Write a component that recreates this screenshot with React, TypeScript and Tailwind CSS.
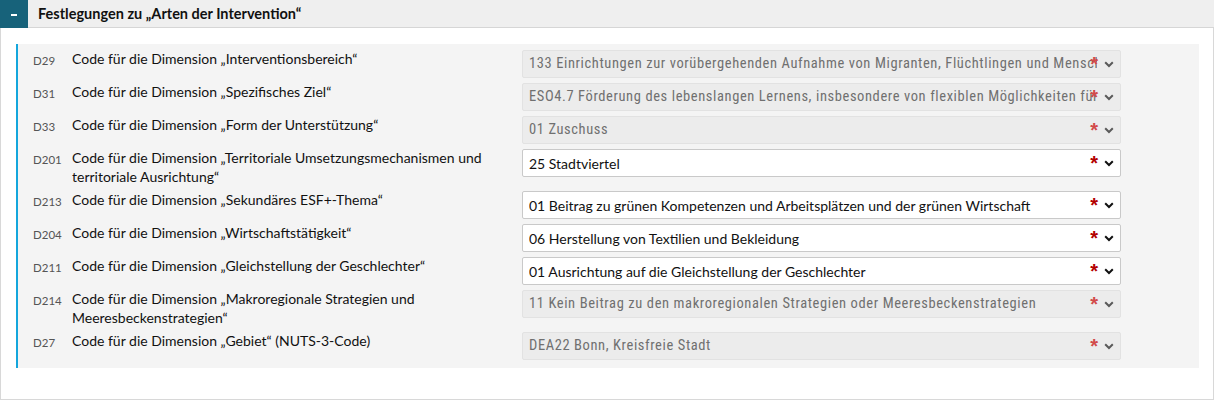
const rows = [
  { code: 'D29', label: 'Code für die Dimension „Interventionsbereich“', value: '133 Einrichtungen zur vorübergehenden Aufnahme von Migranten, Flüchtlingen und Menschen, die internationalen Schutz beantragen oder genießen', disabled: true },
  { code: 'D31', label: 'Code für die Dimension „Spezifisches Ziel“', value: 'ESO4.7 Förderung des lebenslangen Lernens, insbesondere von flexiblen Möglichkeiten für Weiterbildung und Umschulung', disabled: true },
  { code: 'D33', label: 'Code für die Dimension „Form der Unterstützung“', value: '01 Zuschuss', disabled: true },
  { code: 'D201', label: 'Code für die Dimension „Territoriale Umsetzungsmechanismen und territoriale Ausrichtung“', value: '25 Stadtviertel', disabled: false },
  { code: 'D213', label: 'Code für die Dimension „Sekundäres ESF+-Thema“', value: '01 Beitrag zu grünen Kompetenzen und Arbeitsplätzen und der grünen Wirtschaft', disabled: false },
  { code: 'D204', label: 'Code für die Dimension „Wirtschaftstätigkeit“', value: '06 Herstellung von Textilien und Bekleidung', disabled: false },
  { code: 'D211', label: 'Code für die Dimension „Gleichstellung der Geschlechter“', value: '01 Ausrichtung auf die Gleichstellung der Geschlechter', disabled: false },
  { code: 'D214', label: 'Code für die Dimension „Makroregionale Strategien und Meeresbeckenstrategien“', value: '11 Kein Beitrag zu den makroregionalen Strategien oder Meeresbeckenstrategien', disabled: true },
  { code: 'D27', label: 'Code für die Dimension „Gebiet“ (NUTS-3-Code)', value: 'DEA22 Bonn, Kreisfreie Stadt', disabled: true },
];

const Chevron = ({ dim }: { dim: boolean }) => (
  <svg width="10" height="7" viewBox="0 0 10 7" className="shrink-0">
    <path d="M1.2 1.3 5 5 8.8 1.3" fill="none" stroke={dim ? '#5a5a5a' : '#111'} strokeWidth="2" />
  </svg>
);

const Select = ({ value, disabled }: { value: string; disabled: boolean }) => (
  <div
    className={
      disabled
        ? 'flex h-[28px] w-[599px] shrink-0 items-center rounded-[2px] border border-[#e2e2e2] bg-[#ececec] pl-[6px] pr-[6px]'
        : 'flex h-[28px] w-[599px] shrink-0 items-center rounded-[2px] border border-[#c9c9c9] bg-white pl-[6px] pr-[6px]'
    }
  >
    <span
      className={
        disabled
          ? 'min-w-0 flex-1 overflow-hidden whitespace-nowrap text-[14.5px] tracking-[0.6px] text-[#707070] [font-family:"Liberation_Sans_Narrow","Roboto_Condensed",Roboto,sans-serif]'
          : 'min-w-0 flex-1 overflow-hidden whitespace-nowrap text-[14px] text-[#111]'
      }
    >
      {value}
    </span>
    <span
      className={
        disabled
          ? 'ml-[-7px] h-[20px] text-[20px] font-bold leading-none text-[#d24a4a] [font-family:"Liberation_Sans",sans-serif]'
          : 'ml-[-7px] h-[20px] text-[20px] font-bold leading-none text-[#b30000] [font-family:"Liberation_Sans",sans-serif]'
      }
    >
      *
    </span>
    <span className="ml-[6px] flex items-center">
      <Chevron dim={disabled} />
    </span>
  </div>
);

const App = () => {
  return (
    <div className="w-[1214px] h-[400px] bg-white text-[#111] [font-family:Lato,'Noto_Sans',sans-serif]">
      <div className="flex h-[28px] items-center border-b border-[#d6d6d6] bg-[#efefef]">
        <div className="flex h-[28px] w-[28px] items-center justify-center bg-[#17627a]">
          <span className="mt-[3px] h-[2px] w-[6px] bg-white" />
        </div>
        <span className="pl-[10px] text-[14.5px] font-bold">Festlegungen zu „Arten der Intervention“</span>
      </div>

      <div className="h-[372px] border-x border-b border-[#d8d8d8] pt-[16px] pl-[15px] pr-[14px]">
        <div className="border-l-2 border-[#14a6dc] bg-[#f4f4f4] pt-[6px] pb-[3px] pl-[15px]">
          {rows.map((r) => (
            <div key={r.code} className="mb-[5px] flex items-start">
              <span className="w-[39px] shrink-0 pt-[1px] text-[11.5px] leading-[19px] text-[#555]">{r.code}</span>
              <span className="mt-[-1px] w-[450px] shrink-0 pr-[30px] text-[14px] leading-[19px]">{r.label}</span>
              <Select value={r.value} disabled={r.disabled} />
            </div>
          ))}
        </div>
      </div>
    </div>
  );
};

export default App;
